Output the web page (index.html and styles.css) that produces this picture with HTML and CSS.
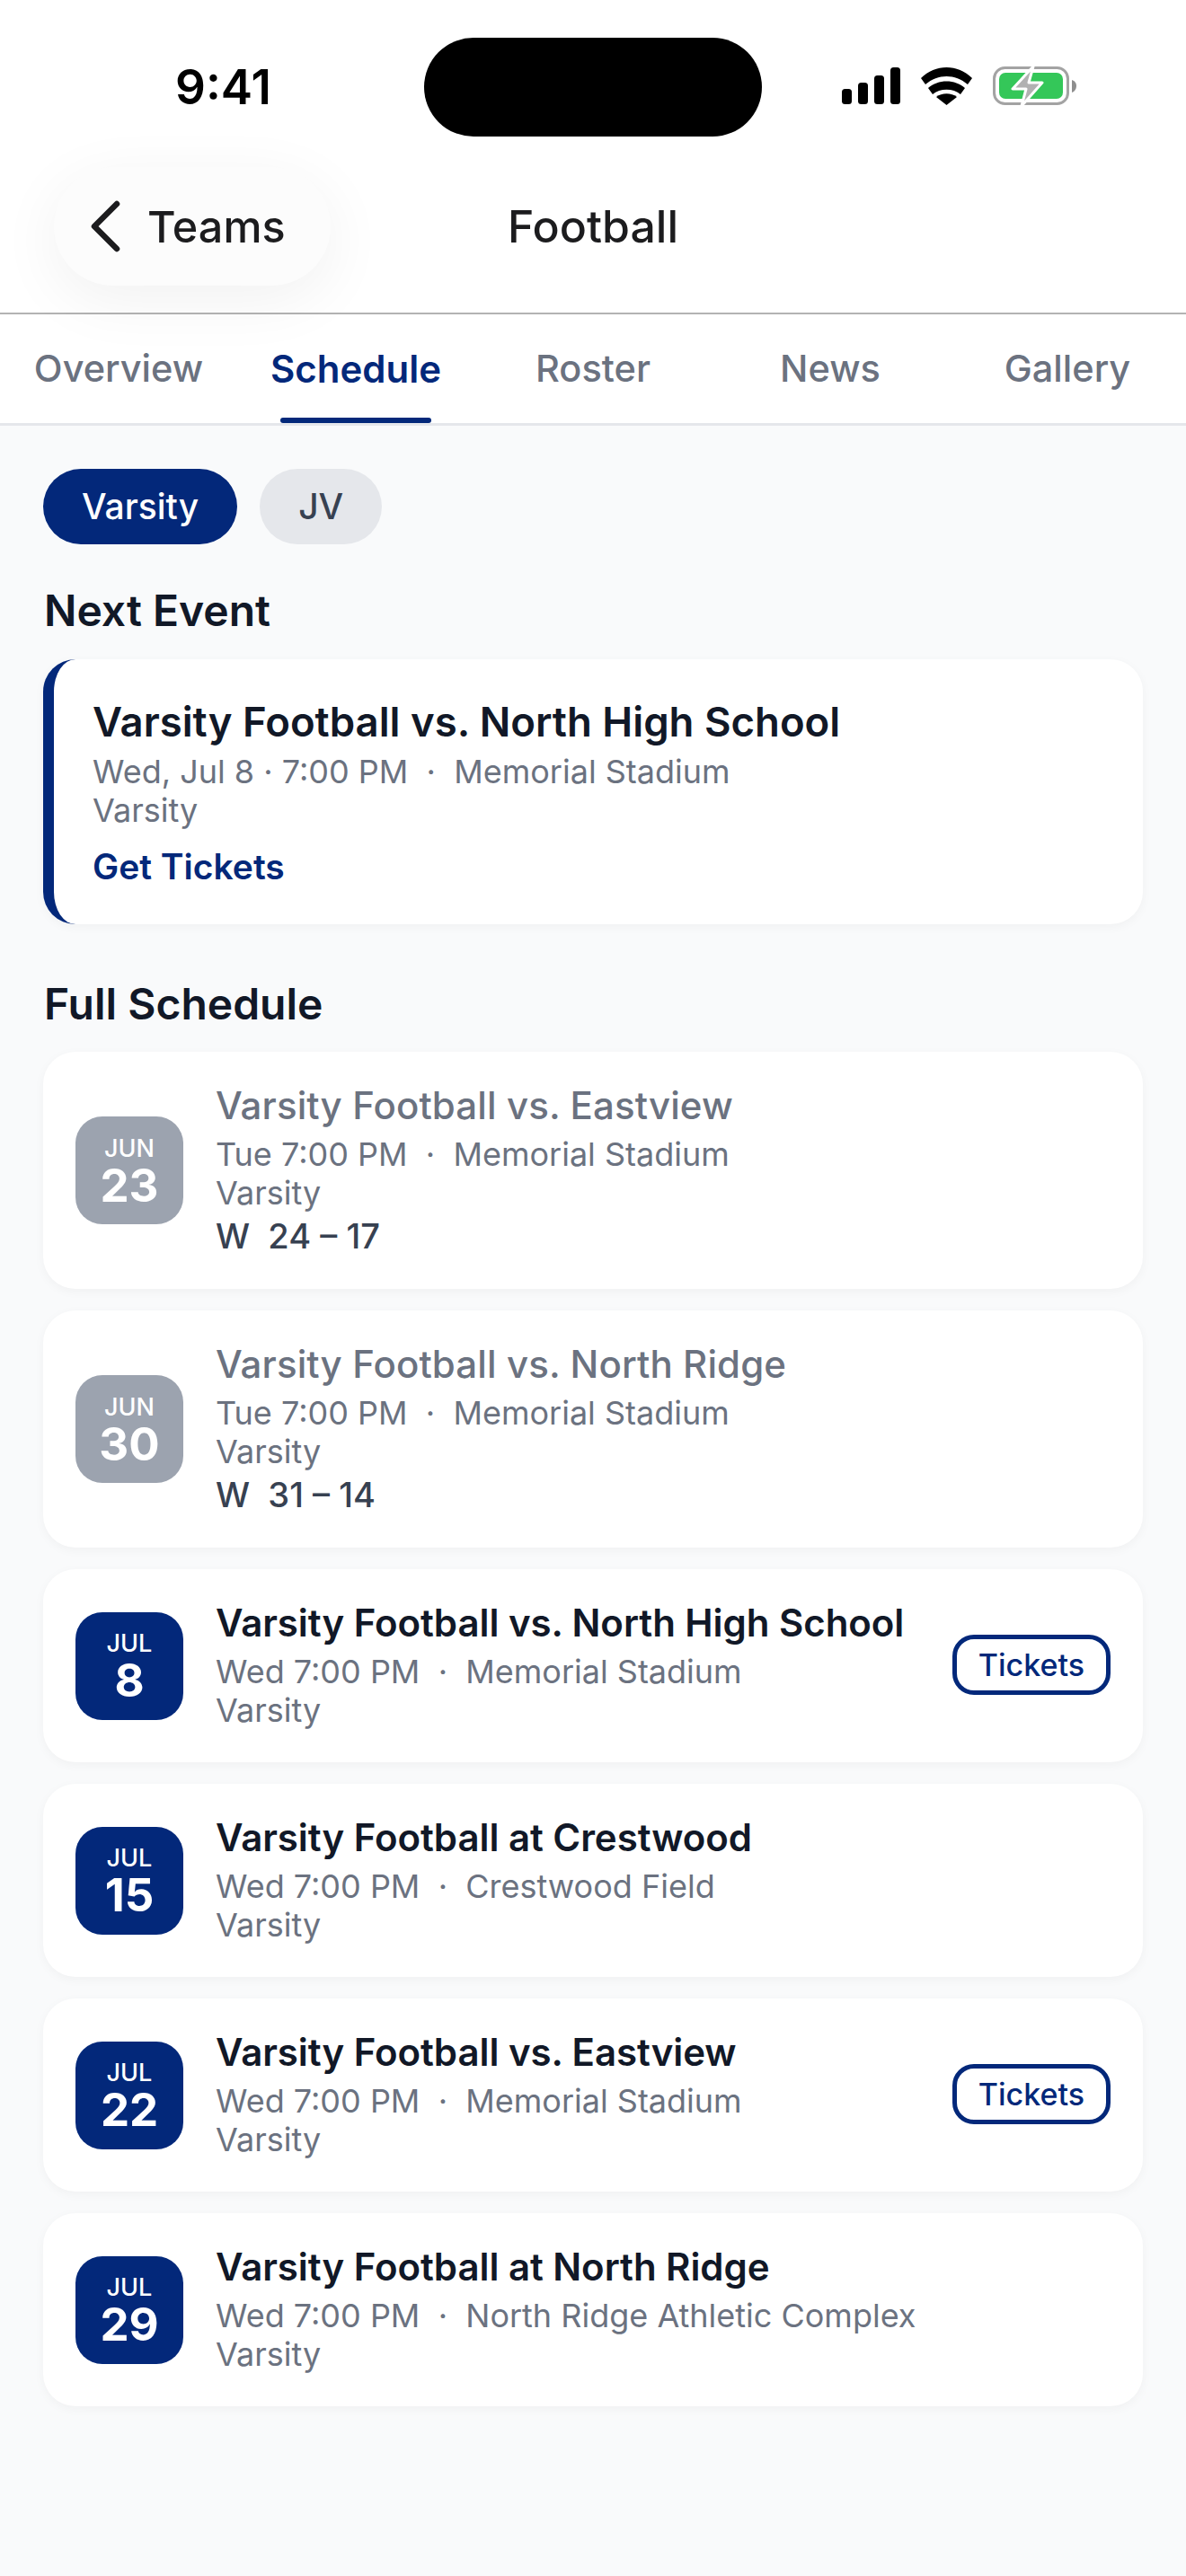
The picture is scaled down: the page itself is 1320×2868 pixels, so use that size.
FILE: index.html
```html
<!DOCTYPE html>
<html lang="en">
  <head>
    <meta charset="UTF-8" />
    <meta name="viewport" content="width=device-width, initial-scale=1.0" />
    <title>Football</title>
    <link rel="stylesheet" href="styles.css">
  </head>
  <body>
    <header class="top">
      <div class="status">
        <span class="time">9:41</span>
        <div class="island"></div>
        <svg class="status-icons" width="262" height="46" viewBox="0 0 262 46">
          <!-- signal -->
          <rect x="1" y="25" width="11" height="17" rx="3.5" />
          <rect x="19" y="18" width="11" height="24" rx="3.5" />
          <rect x="37" y="10" width="11" height="32" rx="3.5" />
          <rect x="55" y="1" width="11" height="41" rx="3.5" />
          <!-- wifi -->
          <path d="M89 13C105 -3 130 -3 146 13L141 20C127 8 108 8 94 20Z" />
          <path d="M97 24C108 14 127 14 138 24L133 31C125 24 110 24 102 31Z" />
          <path d="M106 34C112 29 123 29 129 34L117.500 43Z" />
          <!-- battery -->
          <rect x="170.500" y="1.500" width="82" height="40" rx="12" fill="none" stroke="#a3a3a3" stroke-width="3" />
          <path d="M257 15C260 16 262 18 262 22C262 25 260 28 257 29Z" fill="#8e8e8e" />
          <rect x="176" y="7" width="71" height="29" rx="7" fill="#34c759" />
          <path d="M214 0L191 25H206L201 44L224 18H209Z" fill="#b1b1b1" stroke="#fff" stroke-width="3" stroke-linejoin="round" />
        </svg>
      </div>
      <nav class="nav">
        <a class="back">
          <svg width="34" height="58" viewBox="0 0 34 58">
            <path d="M30 4L5 29L30 54" fill="none" stroke="#1c1c1e" stroke-width="6.500" stroke-linecap="round" stroke-linejoin="round" />
          </svg>
          <span>Teams</span>
        </a>
        <h1 class="nav-title">Football</h1>
      </nav>
      <div class="tabs">
        <a class="tab">Overview</a>
        <a class="tab tab-active">Schedule</a>
        <a class="tab">Roster</a>
        <a class="tab">News</a>
        <a class="tab">Gallery</a>
      </div>
    </header>

    <main class="content">
      <div class="pills">
        <a class="pill pill-active">Varsity</a>
        <a class="pill">JV</a>
      </div>

      <h2 class="section-title">Next Event</h2>
      <section class="next-card">
        <h3 class="next-title">Varsity Football vs. North High School</h3>
        <p class="meta">Wed, Jul 8 · 7:00 PM &nbsp;·&nbsp; Memorial Stadium</p>
        <p class="meta">Varsity</p>
        <a class="get-tickets">Get Tickets</a>
      </section>

      <h2 class="section-title section-full">Full Schedule</h2>
      <div class="list">
        <article class="event event-past">
          <div class="date"><span class="month">JUN</span><span class="day">23</span></div>
          <div class="info">
            <h3 class="event-title">Varsity Football vs. Eastview</h3>
            <p class="meta">Tue 7:00 PM &nbsp;·&nbsp; Memorial Stadium</p>
            <p class="meta">Varsity</p>
            <p class="score">W &nbsp;24 – 17</p>
          </div>
        </article>
        <article class="event event-past">
          <div class="date"><span class="month">JUN</span><span class="day">30</span></div>
          <div class="info">
            <h3 class="event-title">Varsity Football vs. North Ridge</h3>
            <p class="meta">Tue 7:00 PM &nbsp;·&nbsp; Memorial Stadium</p>
            <p class="meta">Varsity</p>
            <p class="score">W &nbsp;31 – 14</p>
          </div>
        </article>
        <article class="event">
          <div class="date"><span class="month">JUL</span><span class="day">8</span></div>
          <div class="info">
            <h3 class="event-title">Varsity Football vs. North High School</h3>
            <p class="meta">Wed 7:00 PM &nbsp;·&nbsp; Memorial Stadium</p>
            <p class="meta">Varsity</p>
          </div>
          <a class="tickets">Tickets</a>
        </article>
        <article class="event">
          <div class="date"><span class="month">JUL</span><span class="day">15</span></div>
          <div class="info">
            <h3 class="event-title">Varsity Football at Crestwood</h3>
            <p class="meta">Wed 7:00 PM &nbsp;·&nbsp; Crestwood Field</p>
            <p class="meta">Varsity</p>
          </div>
        </article>
        <article class="event">
          <div class="date"><span class="month">JUL</span><span class="day">22</span></div>
          <div class="info">
            <h3 class="event-title">Varsity Football vs. Eastview</h3>
            <p class="meta">Wed 7:00 PM &nbsp;·&nbsp; Memorial Stadium</p>
            <p class="meta">Varsity</p>
          </div>
          <a class="tickets">Tickets</a>
        </article>
        <article class="event">
          <div class="date"><span class="month">JUL</span><span class="day">29</span></div>
          <div class="info">
            <h3 class="event-title">Varsity Football at North Ridge</h3>
            <p class="meta">Wed 7:00 PM &nbsp;·&nbsp; North Ridge Athletic Complex</p>
            <p class="meta">Varsity</p>
          </div>
        </article>
      </div>
    </main>
  </body>
</html>
```

FILE: styles.css
```css
* {
  box-sizing: border-box;
}
body {
  margin: 0;
  min-height: 2868px;
  background-color: #f9fafb;
  font-family: Inter, "Noto Sans", sans-serif;
  color: #111827;
}
h1,
h2,
h3,
p {
  margin: 0;
}

/* status bar + nav */
.top {
  background-color: white;
}
.status {
  display: flex;
  align-items: center;
  height: 152px;
  padding: 42px 0 0 195px;
}
.time {
  width: 277px;
  font-size: 53px;
  font-weight: 600;
  color: #000;
}
.island {
  width: 376px;
  height: 110px;
  border-radius: 55px;
  background-color: #000;
}
.status-icons {
  margin-left: 88px;
}
.nav {
  display: grid;
  grid-template-columns: 1fr auto 1fr;
  align-items: center;
  height: 198px;
  padding: 34px 0 30px 60px;
  border-bottom: 2px solid #b3b3b3;
}
.back {
  display: flex;
  align-items: center;
  gap: 30px;
  justify-self: start;
  width: 308px;
  height: 132px;
  padding-left: 40px;
  border-radius: 66px;
  background-color: #fcfcfc;
  box-shadow: 0 16px 70px rgba(0, 0, 0, 0.06);
  font-size: 48.500px;
  font-weight: 500;
  color: #1c1c1e;
}
.nav-title {
  margin-left: -60px;
  font-size: 50px;
  font-weight: 500;
  color: #1c1c1e;
}
.tabs {
  display: flex;
  height: 124px;
  border-bottom: 3px solid #e5e7eb;
}
.tab {
  flex: 1;
  position: relative;
  padding-top: 35px;
  text-align: center;
  font-size: 41.500px;
  font-weight: 500;
  color: #6b7280;
}
.tab-active {
  font-size: 42px;
  font-weight: 600;
  color: #03287a;
}
.tab-active::after {
  content: "";
  position: absolute;
  left: 48px;
  right: 48px;
  bottom: 0;
  height: 6px;
  border-radius: 3px;
  background-color: #03287a;
}

/* page body */
.content {
  padding: 48px 48px 0;
}
.pills {
  display: flex;
  gap: 25px;
}
.pill {
  height: 84px;
  padding: 0 43px;
  border-radius: 42px;
  background-color: #e5e7eb;
  font-size: 39px;
  font-weight: 500;
  line-height: 84px;
  color: #374151;
}
.pill-active {
  background-color: #03287a;
  color: white;
}
.section-title {
  margin-top: 44px;
  margin-bottom: 24px;
  padding-left: 1px;
  font-size: 48px;
  font-weight: 600;
  line-height: 60px;
}
.section-full {
  margin-top: 59px;
  margin-bottom: 23px;
}
.next-card {
  height: 295px;
  padding: 40px 40px 0 43px;
  border-left: 12px solid #03287a;
  border-radius: 36px;
  background: white;
  box-shadow: 0 3px 12px rgba(0, 0, 0, 0.04);
}
.next-title {
  font-size: 45.500px;
  font-weight: 600;
  line-height: 60px;
}
.meta {
  font-size: 36px;
  line-height: 43px;
  color: #6b7280;
}
.next-title + .meta {
  margin-top: 4px;
}
.get-tickets {
  display: block;
  margin-top: 18px;
  font-size: 39px;
  font-weight: 600;
  line-height: 46px;
  color: #03287a;
}
.list {
  display: flex;
  flex-direction: column;
  gap: 24px;
}
.event {
  display: flex;
  align-items: center;
  gap: 36px;
  padding: 33px 36px 36px;
  border-radius: 36px;
  background: white;
  box-shadow: 0 3px 12px rgba(0, 0, 0, 0.04);
}
.date {
  display: flex;
  flex-direction: column;
  align-items: center;
  justify-content: center;
  flex-shrink: 0;
  width: 120px;
  height: 120px;
  margin-top: 3px;
  padding-top: 2px;
  border-radius: 30px;
  background-color: #03287a;
  color: white;
}
.event-past .date {
  background-color: #9ca3af;
}
.month {
  font-size: 27px;
  font-weight: 500;
  line-height: 30px;
}
.day {
  font-size: 51px;
  font-weight: 700;
  line-height: 51px;
}
.info {
  flex: 1;
}
.event-title {
  font-size: 42px;
  font-weight: 600;
  line-height: 54px;
  letter-spacing: -0.05px;
}
.event-past .event-title {
  font-weight: 500;
  letter-spacing: 0.1px;
  color: #6b7280;
}
.event-title + .meta {
  margin-top: 6px;
}
.score {
  margin-top: 3px;
  font-size: 38px;
  font-weight: 500;
  line-height: 46px;
  color: #374151;
}
.tickets {
  padding: 8px 24px;
  border: 5px solid #03287a;
  border-radius: 24px;
  font-size: 34px;
  font-weight: 500;
  line-height: 41px;
  color: #03287a;
}
```
